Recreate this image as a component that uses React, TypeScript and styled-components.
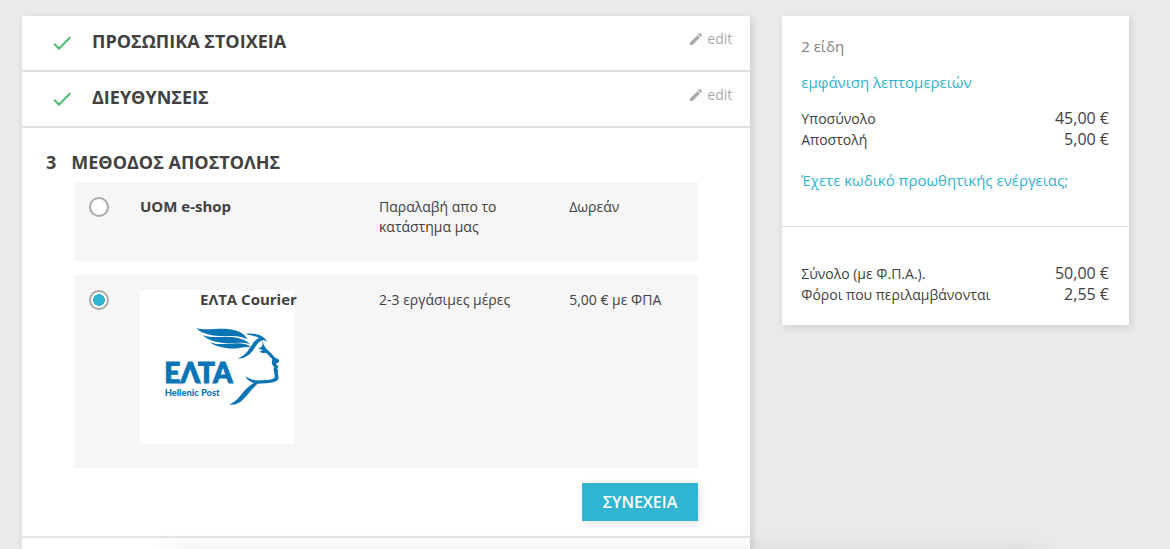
import React, { useState } from "react";
import styled, { createGlobalStyle } from "styled-components";
import { MdCheck, MdEdit } from "react-icons/md";

const color = {
  page: "#eaeaea",
  text: "#414141",
  muted: "#808080",
  faint: "#acaaa6",
  accent: "#2fb5d2",
  done: "#4cbb6c",
  logo: "#0a74b5",
};

const GlobalStyle = createGlobalStyle`
  *, *::before, *::after { box-sizing: border-box; }
  html, body { margin: 0; min-height: 100%; background: ${color.page}; }
  body {
    font-family: "Open Sans", "Noto Sans", sans-serif;
    color: ${color.text};
  }
  html { scrollbar-width: none; }
  button { font-family: inherit; border: 0; cursor: pointer; }
`;

const Page = styled.main`
  display: grid;
  grid-template-columns: 21fr 10fr;
  align-items: start;
  gap: 32px;
  padding: 16px 41px 0 22px;
`;

const Steps = styled.div`
  display: flex;
  flex-direction: column;
  gap: 2px;
  background: #e5e5e5;
  box-shadow: 2px 2px 8px 0 rgba(0, 0, 0, 0.12);
`;

const Step = styled.section`
  background: #fff;
`;

const DoneHeader = styled(Step)`
  display: flex;
  align-items: flex-start;
  height: 54px;
  padding: 13px 18px 0 28px;
  box-shadow: 0 1px 3px rgba(0, 0, 0, 0.04);

  > svg { flex: none; margin: 2px 18px 0 0; color: ${color.done}; }
`;

const StepTitle = styled.h1`
  flex: 1;
  margin: 0;
  font-size: 18px;
  line-height: 24px;
  font-weight: 700;
`;

const EditButton = styled.button`
  display: flex;
  align-items: center;
  gap: 3px;
  padding: 0;
  background: none;
  color: ${color.faint};
  font-size: 14px;
  line-height: 20px;
`;

const StepNumber = styled.span`
  margin-right: 15px;
`;

const CurrentStep = styled(Step)`
  padding: 22px 52px 15px;
`;

const CurrentTitle = styled(StepTitle)`
  margin: 0 0 8px -28px;
`;

const Options = styled.div`
  display: flex;
  flex-direction: column;
  gap: 14px;
`;

const Option = styled.label`
  display: grid;
  grid-template-columns: 51px 44fr 35fr 21fr;
  align-items: start;
  padding: 15px 15px 24px;
  background: #f6f6f6;
  font-size: 14px;
  line-height: 20px;
  cursor: pointer;
`;

const Radio = styled.input`
  appearance: none;
  width: 20px;
  height: 20px;
  margin: 0;
  border: 2px solid #a9a9a5;
  border-radius: 50%;
  background: #fff;

  &:checked {
    background: radial-gradient(circle, ${color.accent} 6px, #fff 6px);
  }
`;

const Carrier = styled.span<{ $logo?: boolean }>`
  display: grid;
  grid-template-columns: ${(p) => (p.$logo ? "60px 1fr" : "1fr")};
  align-items: start;
  font-size: 15px;
  line-height: 18px;
  font-weight: 700;

  > svg { grid-row: 1; grid-column: 1; }
`;

const CarrierName = styled.span`
  position: relative;
`;

const Actions = styled.div`
  display: flex;
  justify-content: flex-end;
  margin-top: 15px;
`;

const ContinueButton = styled.button`
  padding: 8px 21px;
  background: ${color.accent};
  color: #fff;
  font-size: 16px;
  line-height: 22px;
  font-weight: 600;
  box-shadow: 2px 2px 8px 0 rgba(0, 0, 0, 0.12);
`;

const NextStep = styled(Step)`
  height: 54px;
`;

const Summary = styled.aside`
  background: #fff;
  box-shadow: 2px 2px 8px 0 rgba(0, 0, 0, 0.12);
`;

const SummaryBlock = styled.div<{ $totals?: boolean }>`
  padding: ${(p) => (p.$totals ? "36px 20px 20px 19px" : "19px 20px 35px 19px")};

  & + & { border-top: 1px solid #e2e2e2; }
`;

const Count = styled.p`
  margin: 0 0 14px;
  color: ${color.muted};
  font-size: 15px;
  line-height: 22px;
`;

const SummaryLink = styled.a`
  display: block;
  color: ${color.accent};
  font-size: 15px;
  line-height: 22px;
  text-decoration: none;
`;

const Lines = styled.dl<{ $spaced?: boolean }>`
  margin: ${(p) => (p.$spaced ? "15px 0 19px" : "0")};
`;

const Line = styled.div`
  display: flex;
  justify-content: space-between;
  line-height: 21px;

  dt { font-size: 14px; }
  dd { margin: 0; font-size: 16px; }
`;

const FooterShadow = styled.div`
  position: fixed;
  top: 100%;
  left: 170px;
  right: 130px;
  height: 100px;
  box-shadow: 0 4px 28px 0 rgba(0, 0, 0, 0.1);
  pointer-events: none;
`;

function EltaLogo() {
  return (
    <svg width="154" height="154" viewBox="30 30 462 462" role="img" aria-label="ΕΛΤΑ Hellenic Post">
      <rect x="30" y="30" width="462" height="462" fill="#fff" />
      <g fill={color.logo}>
        <path d="M199 144C225 153 260 144 292 147C326 150 345 162 352 178C322 163 292 171 256 167C228 164 209 156 199 144Z" />
        <path d="M217 165C245 177 278 166 312 172C337 176 352 184 360 193C333 184 312 192 281 189C252 186 231 178 217 165Z" />
        <path d="M241 187C266 198 298 188 327 190C345 191 355 195 362 201C340 199 322 208 293 205C268 202 251 197 241 187Z" />
        <path d="M347 162C375 157 404 166 411 186L402 180C387 182 380 195 372 207C360 225 344 236 323 236C344 227 354 214 363 199C371 186 376 179 387 174C376 168 362 166 347 162Z" />
        <path d="M397 176C399 192 405 204 415 212C426 220 431 232 443 237C450 241 449 248 440 249L438 253L445 259L442 266L445 273C440 280 448 286 445 297C439 308 420 310 383 311C365 328 353 345 338 360C327 371 313 376 298 374C316 366 326 354 337 340C350 323 361 316 371 309C359 305 349 299 347 289C360 300 376 302 393 301C412 299 427 300 433 293C437 287 431 283 433 277L430 268L433 262L427 254C422 245 430 241 425 235C417 229 414 222 408 218C402 220 394 218 388 215L399 210L385 206C393 203 398 199 398 192Z" />
        <text x="103" y="308" fontFamily="Lato, sans-serif" fontWeight="900" fontSize="84" stroke={color.logo} strokeWidth="3">ΕΛΤΑ</text>
        <text x="104" y="349" fontFamily="Lato, sans-serif" fontWeight="900" fontSize="28">Hellenic Post</text>
      </g>
    </svg>
  );
}

const carriers = [
  { id: "pickup", name: "UOM e-shop", delay: "Παραλαβή απο το κατάστημα μας", price: "Δωρεάν" },
  { id: "elta", name: "ΕΛΤΑ Courier", delay: "2-3 εργάσιμες μέρες", price: "5,00 € με ΦΠΑ", logo: true },
];

const subtotals = [
  ["Υποσύνολο", "45,00 €"],
  ["Αποστολή", "5,00 €"],
];

const totals = [
  ["Σύνολο (με Φ.Π.Α.).", "50,00 €"],
  ["Φόροι που περιλαμβάνονται", "2,55 €"],
];

function CompletedStep({ title }: { title: string }) {
  return (
    <DoneHeader>
      <MdCheck size={24} />
      <StepTitle>{title}</StepTitle>
      <EditButton type="button">
        <MdEdit size={16} />
        edit
      </EditButton>
    </DoneHeader>
  );
}

function PriceLines({ rows, spaced }: { rows: string[][]; spaced?: boolean }) {
  return (
    <Lines $spaced={spaced}>
      {rows.map(([label, value]) => (
        <Line key={label}>
          <dt>{label}</dt>
          <dd>{value}</dd>
        </Line>
      ))}
    </Lines>
  );
}

export default function App() {
  const [selected, setSelected] = useState("elta");

  return (
    <>
      <GlobalStyle />
      <Page>
        <Steps>
          <CompletedStep title="ΠΡΟΣΩΠΙΚΑ ΣΤΟΙΧΕΙΑ" />
          <CompletedStep title="ΔΙΕΥΘΥΝΣΕΙΣ" />
          <CurrentStep>
            <CurrentTitle>
              <StepNumber>3</StepNumber>
              ΜΕΘΟΔΟΣ ΑΠΟΣΤΟΛΗΣ
            </CurrentTitle>
            <Options>
              {carriers.map((c) => (
                <Option key={c.id} htmlFor={c.id}>
                  <Radio
                    type="radio"
                    id={c.id}
                    name="carrier"
                    checked={selected === c.id}
                    onChange={() => setSelected(c.id)}
                  />
                  <Carrier $logo={c.logo}>
                    {c.logo && <EltaLogo />}
                    <CarrierName>{c.name}</CarrierName>
                  </Carrier>
                  <span>{c.delay}</span>
                  <span>{c.price}</span>
                </Option>
              ))}
            </Options>
            <Actions>
              <ContinueButton type="button">ΣΥΝΕΧΕΙΑ</ContinueButton>
            </Actions>
          </CurrentStep>
          <NextStep />
        </Steps>
        <Summary>
          <SummaryBlock>
            <Count>2 είδη</Count>
            <SummaryLink href="#details">εμφάνιση λεπτομερειών</SummaryLink>
            <PriceLines rows={subtotals} spaced />
            <SummaryLink href="#promo">Έχετε κωδικό προωθητικής ενέργειας;</SummaryLink>
          </SummaryBlock>
          <SummaryBlock $totals>
            <PriceLines rows={totals} />
          </SummaryBlock>
        </Summary>
      </Page>
      <FooterShadow />
    </>
  );
}
